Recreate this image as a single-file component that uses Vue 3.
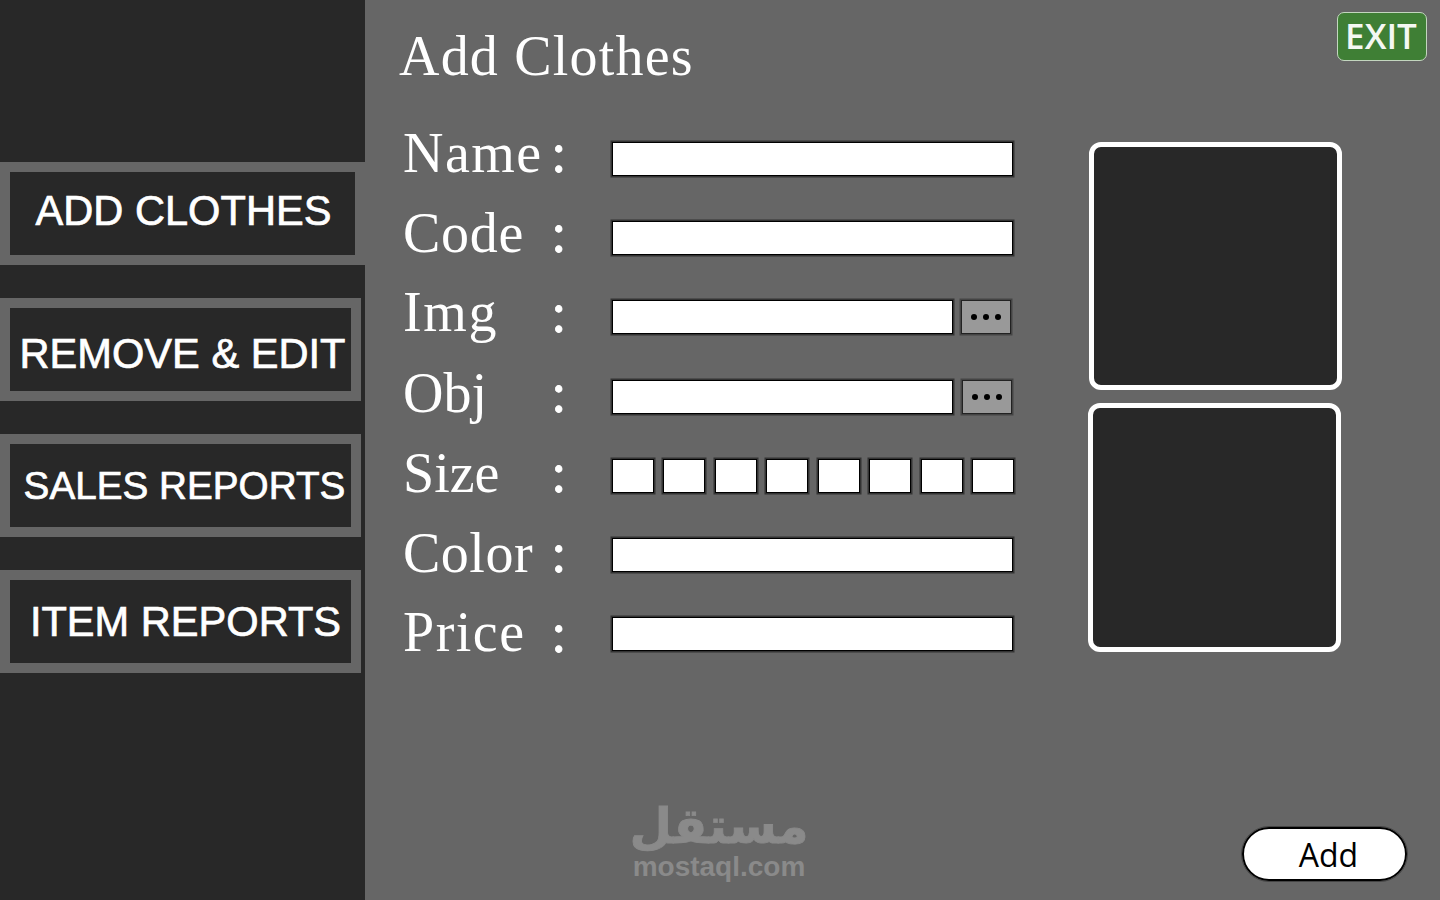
<script setup>
const navItems = [
  { label: 'ADD CLOTHES', cls: 'nav-add' },
  { label: 'REMOVE & EDIT', cls: 'nav-remove' },
  { label: 'SALES REPORTS', cls: 'nav-sales' },
  { label: 'ITEM REPORTS', cls: 'nav-item' }
]

// spacing: tracking that brings each label to the reference width
const fields = [
  { label: 'Name', type: 'text', spacing: 1.5 },
  { label: 'Code', type: 'text', spacing: 0.7 },
  { label: 'Img', type: 'file', spacing: 1.7 },
  { label: 'Obj', type: 'file', spacing: 0 },
  { label: 'Size', type: 'sizes', spacing: 0 },
  { label: 'Color', type: 'text', spacing: 0.5 },
  { label: 'Price', type: 'text', spacing: 1.5 }
]

const labelStyle = (f, i) => ({
  letterSpacing: f.spacing + 'px',
  transform: `translateY(${-6 + i * 0.7}px)`
})

const colonStyle = (i) => ({
  transform: `translateY(${-6 + i * 0.8}px)`
})
</script>

<template>
  <div class="page">
    <aside class="sidebar">
      <button v-for="item in navItems" :key="item.label" class="nav-btn" :class="item.cls">
        <span>{{ item.label }}</span>
      </button>
    </aside>

    <main class="main">
      <header class="top">
        <h1>Add Clothes</h1>
        <button class="exit">EXIT</button>
      </header>

      <section class="content">
        <div class="form">
          <div v-for="(f, i) in fields" :key="f.label" class="row">
            <label :style="labelStyle(f, i)">{{ f.label }}</label>
            <span class="colon" :style="colonStyle(i)">:</span>
            <div v-if="f.type === 'text'" class="control">
              <input type="text" class="box" />
            </div>
            <div v-else-if="f.type === 'file'" class="control file">
              <input type="text" class="box" />
              <button class="browse" :class="{ shifted: f.label === 'Obj' }" aria-label="Browse">
                <i></i><i></i><i></i>
              </button>
            </div>
            <div v-else class="control sizes">
              <input v-for="n in 8" :key="n" type="text" class="box" />
            </div>
          </div>
        </div>

        <div class="previews">
          <div class="preview"></div>
          <div class="preview second"></div>
        </div>
      </section>

      <footer class="bottom">
        <div class="mark">
          <span class="mark-ar" dir="rtl" lang="ar">مستقل</span>
          <span class="mark-en">mostaql.com</span>
        </div>
        <button class="add">Add</button>
      </footer>
    </main>
  </div>
</template>

<style>
html,
body {
  background: #666;
}
</style>

<style scoped>
.page {
  width: 1440px;
  height: 900px;
  display: flex;
  overflow: hidden;
  background: #666;
}

/* sidebar */
.sidebar {
  width: 365px;
  flex: none;
  box-sizing: border-box;
  padding-top: 162px;
  background: #282828;
  display: flex;
  flex-direction: column;
  gap: 33px;
}

.nav-btn {
  width: 361px;
  height: 103px;
  box-sizing: border-box;
  border: 10px solid #666;
  padding: 0;
  background: #282828;
  color: #fff;
  font-family: "Liberation Sans", Arial, sans-serif;
  font-size: 41.6px;
  line-height: 1;
  white-space: nowrap;
  display: flex;
  align-items: center;
  justify-content: center;
  -webkit-text-stroke: 0.7px #fff;
}

.nav-add {
  width: 365px;
}
.nav-add span { transform: translate(1px, -3px); }

.nav-remove span { transform: translate(2px, 4px); }

.nav-sales { font-size: 38.7px; }
.nav-sales span { transform: translate(4px, 1px); }

.nav-item span { transform: translate(5px, 0); }

/* main */
.main {
  flex: 1;
  display: flex;
  flex-direction: column;
  padding: 12px 13px 19px 35px;
  min-width: 0;
}

.top {
  display: flex;
  justify-content: space-between;
  align-items: flex-start;
  height: 129px;
}

h1 {
  margin: 12px 0 0 -1px;
  font-family: "Liberation Serif", "Times New Roman", serif;
  font-weight: 400;
  font-size: 56px;
  line-height: 64px;
  letter-spacing: 1.2px;
  color: #fff;
}

.exit {
  width: 90px;
  height: 49px;
  box-sizing: border-box;
  padding: 0 2px 2px 0;
  background: #3f7f35;
  border: 1.5px solid #c3d6bf;
  border-radius: 7px;
  color: #f4f8f3;
  font-family: "Open Sans", "Noto Sans", sans-serif;
  font-weight: 600;
  font-size: 35px;
  line-height: 1;
}

.content {
  display: flex;
  align-items: flex-start;
}

.form {
  width: 650px;
  display: flex;
  flex-direction: column;
  gap: 43.2px;
  margin-left: 3px;
}

.row {
  display: grid;
  grid-template-columns: 148px 60px 403px;
  height: 36px;
  align-items: center;
  color: #fff;
  font-family: "Liberation Serif", "Times New Roman", serif;
  font-size: 56px;
}

.row label {
  line-height: 36px;
}

.colon {
  line-height: 36px;
  -webkit-text-stroke: 0.8px #fff;
}

.control {
  height: 34px;
  padding: 0 1px;
  display: flex;
}

.box {
  flex: 1;
  min-width: 0;
  height: 34px;
  box-sizing: border-box;
  margin: 0;
  padding: 0;
  background: #fff;
  border: 1px solid #000;
  border-radius: 0;
  box-shadow: 0 0 0 1.5px #333;
}

.file {
  gap: 8px;
}

.file .box {
  flex: none;
  width: 341px;
}

.browse {
  width: 50px;
  flex: none;
  box-sizing: border-box;
  margin: 0;
  padding: 0;
  background: #999;
  border: 1px solid #222;
  box-shadow: 0 0 0 1.5px #444;
  display: flex;
  align-items: center;
  justify-content: center;
  gap: 6px;
}

.browse.shifted {
  transform: translateX(1px);
}

.browse i {
  width: 6px;
  height: 6px;
  border-radius: 50%;
  background: #000;
}

.sizes {
  justify-content: space-between;
  margin-right: -1px;
}

.sizes .box {
  flex: none;
  width: 42px;
}

.previews {
  margin-left: 36px;
  margin-top: 1px;
  display: flex;
  flex-direction: column;
  gap: 13px;
}

.preview {
  width: 253px;
  height: 248px;
  box-sizing: border-box;
  background: #282828;
  border: 5px solid #fff;
  border-radius: 12px;
}

.preview.second {
  margin-left: -1px;
  height: 249px;
}

.bottom {
  margin-top: auto;
  padding-right: 20px;
  display: flex;
  justify-content: space-between;
  align-items: flex-end;
}

.mark {
  margin-left: 232px;
  width: 174px;
  display: flex;
  flex-direction: column;
  align-items: center;
  color: #8a8a8a;
  font-family: "DejaVu Sans", sans-serif;
  font-weight: 700;
}

.mark-ar {
  font-size: 49px;
  line-height: 52px;
  -webkit-text-stroke: 0.8px #8a8a8a;
}

.mark-en {
  font-family: "Liberation Sans", Arial, sans-serif;
  font-size: 28px;
  line-height: 28px;
}

.add {
  width: 165px;
  height: 54px;
  box-sizing: border-box;
  padding: 1px 0 0 8px;
  background: #fff;
  border: 2px solid #000;
  outline: 1.5px solid #444;
  outline-offset: 0;
  border-radius: 27px;
  color: #000;
  font-family: "Open Sans", "Noto Sans", sans-serif;
  font-size: 32px;
  line-height: 1;
}
</style>
